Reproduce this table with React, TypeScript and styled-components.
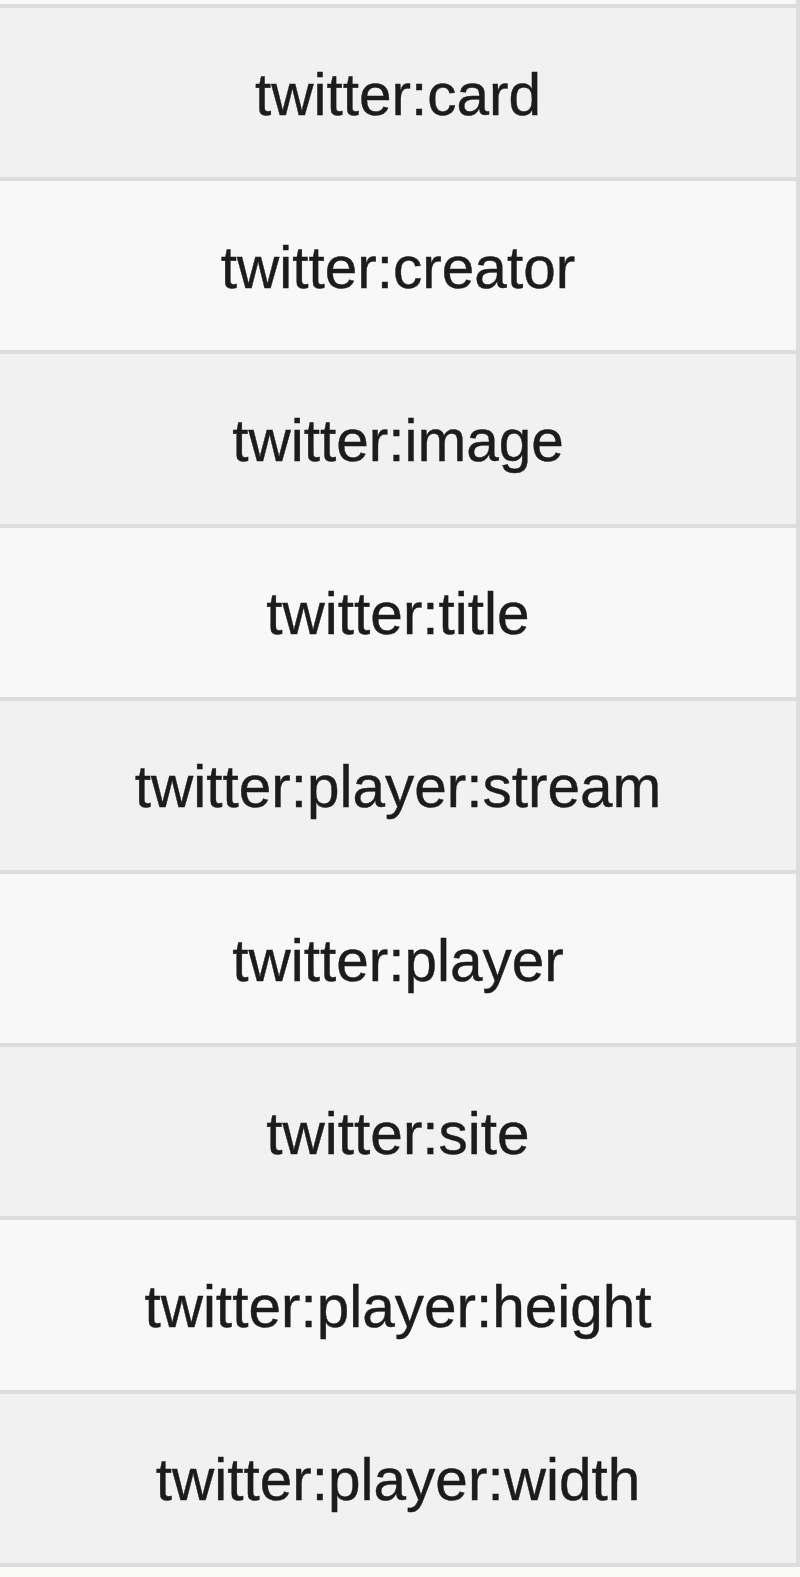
import React from "react";
import styled, { createGlobalStyle } from "styled-components";

const GlobalStyle = createGlobalStyle`
  html, body {
    margin: 0;
    padding: 0;
    background: #f9f9f6;
  }
  * { box-sizing: border-box; }
`;

const Page = styled.div`
  width: 800px;
  height: 1577px;
  overflow: hidden;
  background: #f9f9f6;
`;

const Table = styled.div`
  display: flex;
  flex-direction: column;
  width: 800px;
  padding-top: 4px;
  background: #f8f8f8;
  border-right: 4.5px solid #dddddd;
`;

const Row = styled.div<{ $shade: boolean; $last?: boolean }>`
  display: flex;
  align-items: center;
  justify-content: center;
  height: 173.2px;
  border-top: 4.2px solid #dddddd;
  ${(p) => (p.$last ? "border-bottom: 4.2px solid #dddddd; height: 177.4px;" : "")}
  background: ${(p) => (p.$shade ? "#f1f1f1" : "#f8f8f8")};
  font-family: "Liberation Sans", Arial, Helvetica, sans-serif;
  font-size: 58.5px;
  color: #1c1c1c;
  -webkit-text-stroke: 0.4px #1c1c1c;
  padding-top: 3px;
`;

const items = [
  "twitter:card",
  "twitter:creator",
  "twitter:image",
  "twitter:title",
  "twitter:player:stream",
  "twitter:player",
  "twitter:site",
  "twitter:player:height",
  "twitter:player:width",
];

export default function App() {
  return (
    <Page>
      <GlobalStyle />
      <Table>
        {items.map((t, i) => (
          <Row key={t} $shade={i % 2 === 0} $last={i === items.length - 1}>
            {t}
          </Row>
        ))}
      </Table>
    </Page>
  );
}
